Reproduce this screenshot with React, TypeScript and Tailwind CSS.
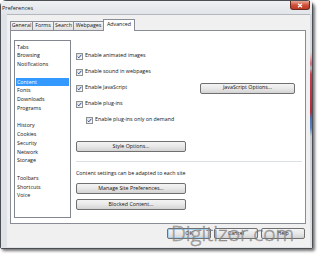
import React from "react";

const Check = () => (
  <span className="w-[7px] h-[7px] border border-[#8e8f8f] bg-linear-to-br from-[#d9dcdf] to-[#fbfbfb] flex items-center justify-center shrink-0">
    <svg viewBox="0 0 7 7" className="w-[5px] h-[5px]">
      <path d="M1 3.8 L2.6 5.4 L6 1.2" stroke="#21409a" strokeWidth="1.3" fill="none" />
    </svg>
  </span>
);

const Btn = ({ children, className = "" }: { children: React.ReactNode; className?: string }) => (
  <div
    className={
      "h-[11px] border border-[#707070] rounded-[2px] bg-linear-to-b from-[#f4f4f4] via-[#e8e8e8] to-[#d3d3d3] flex items-center justify-center text-[#111] shrink-0 " +
      className
    }
  >
    {children}
  </div>
);

const listItems: (string | null)[] = [
  "Tabs",
  "Browsing",
  "Notifications",
  null,
  "Content",
  "Fonts",
  "Downloads",
  "Programs",
  null,
  "History",
  "Cookies",
  "Security",
  "Network",
  "Storage",
  null,
  "Toolbars",
  "Shortcuts",
  "Voice",
];

export default function App() {
  return (
    <div className="w-[318px] h-[254px] bg-white relative overflow-hidden font-['Open_Sans','Noto_Sans',sans-serif] text-[5.3px] text-[#111]">
      <div className="w-[313px] h-[249px] flex flex-col border border-[#4b4f54] rounded-t-[6px] rounded-b-[2px] bg-[#dfe3e7] shadow-[2px_2px_3px_rgba(0,0,0,0.55)]">
        {/* Title bar */}
        <div className="h-[13px] flex items-start shrink-0 bg-linear-to-b from-[#eef0f2] to-[#e2e5e9]">
          <span className="pl-[1px] pt-[4px] text-[5.6px] leading-[7px] text-[#222]">Preferences</span>
          <div className="ml-auto mr-[2px] w-[20px] h-[9px] rounded-b-[3px] border border-t-0 border-[#6b2a20] bg-linear-to-b from-[#e8a898] via-[#d0503a] to-[#c03a26] flex items-center justify-center">
            <svg viewBox="0 0 6 5" className="w-[6px] h-[5px]">
              <path d="M1 0.8 L5 4.2 M5 0.8 L1 4.2" stroke="#fff" strokeWidth="1.2" />
            </svg>
          </div>
        </div>
        {/* Body */}
        <div className="flex-1 flex min-h-0">
          <div className="w-[6px] shrink-0 bg-[#dfe3e7]" />
          <div className="flex-1 flex flex-col bg-[#f0f0f0] border-t border-[#b4b8bc] pt-[4px] pl-[3px] pr-[4px] pb-[8px]">
            {/* Tabs */}
            <div className="h-[11px] flex items-end shrink-0">
              <div className="w-[23px] h-[9px] border border-b-0 border-[#898c95] bg-linear-to-b from-[#f5f5f5] to-[#e2e2e2] flex items-center justify-center">General</div>
              <div className="w-[22px] h-[9px] -ml-px border border-b-0 border-[#898c95] bg-linear-to-b from-[#f5f5f5] to-[#e2e2e2] flex items-center justify-center">Forms</div>
              <div className="w-[21px] h-[9px] -ml-px border border-b-0 border-[#898c95] bg-linear-to-b from-[#f5f5f5] to-[#e2e2e2] flex items-center justify-center">Search</div>
              <div className="w-[31px] h-[9px] -ml-px border border-b-0 border-[#898c95] bg-linear-to-b from-[#f5f5f5] to-[#e2e2e2] flex items-center justify-center">Webpages</div>
              <div className="w-[32px] h-[12px] -ml-px -mb-px relative z-10 border border-b-0 border-[#898c95] bg-white flex items-center justify-center pb-[1px]">Advanced</div>
            </div>
            {/* Panel */}
            <div className="flex-1 flex border border-[#898c95] bg-white pl-[3px] pt-[9px] pb-[5px] pr-[3px] min-h-0">
              <div className="w-[57px] shrink-0 border border-[#828790] bg-white pt-[1.5px]">
                {listItems.map((it, i) =>
                  it === "Content" ? (
                    <div key={i} className="h-[8.75px] leading-[8.75px] mx-[1px] px-[1px] bg-[#3399ff] text-white">
                      {it}
                    </div>
                  ) : (
                    <div key={i} className="h-[8.75px] leading-[8.75px] px-[2px]">
                      {it ?? ""}
                    </div>
                  )
                )}
              </div>
              <div className="flex-1 flex flex-col ml-[5px] pt-[8px]">
                <div className="h-[16px] flex items-center gap-[2px]">
                  <Check />
                  <span>Enable animated images</span>
                </div>
                <div className="h-[16px] flex items-center gap-[2px]">
                  <Check />
                  <span>Enable sound in webpages</span>
                </div>
                <div className="h-[16px] flex items-center gap-[2px]">
                  <Check />
                  <span>Enable JavaScript</span>
                  <Btn className="ml-auto mr-[7px] w-[95px]">JavaScript Options...</Btn>
                </div>
                <div className="h-[16px] flex items-center gap-[2px]">
                  <Check />
                  <span>Enable plug-ins</span>
                </div>
                <div className="h-[16px] flex items-center gap-[2px] pl-[10px]">
                  <Check />
                  <span>Enable plug-ins only on demand</span>
                </div>
                <Btn className="mt-[13px] w-[110px]">Style Options...</Btn>
                <div className="mt-[9px] h-px bg-[#dcdfe3] shrink-0" />
                <div className="mt-[7px] h-[8px] leading-[8px]">Content settings can be adapted to each site</div>
                <Btn className="mt-[6px] w-[110px]">Manage Site Preferences...</Btn>
                <Btn className="mt-[5px] w-[110px]">Blocked Content...</Btn>
              </div>
            </div>
            {/* Bottom buttons */}
            <div className="mt-[4px] h-[11px] flex justify-end gap-[3px] pr-[1px] shrink-0">
              <Btn className="w-[44px] border-[#3c7fb1] shadow-[inset_0_0_0_1px_#a6d3f2]">OK</Btn>
              <Btn className="w-[44px]">Cancel</Btn>
              <Btn className="w-[44px]">Help</Btn>
            </div>
          </div>
          <div className="w-[2px] shrink-0 bg-[linear-gradient(to_bottom,#d6dadf_0px,#d6dadf_38px,#e6a4ac_44px,#d06a78_50px,#b9bfc6_54px,#c8404f_60px,#b42a3a_98px,#4b70b0_104px,#5a82c2_114px,#c9cdd2_122px,#dfe2e5_100%)]" />
        </div>
        <div className="h-[1px] shrink-0 bg-[#dfe3e7]" />
      </div>
      <div className="absolute left-[171px] top-[223px] text-[21px] leading-none font-light text-[rgba(170,170,170,0.6)] [-webkit-text-stroke:0.5px_rgba(100,100,100,0.75)] pointer-events-none">
        Digitizor.com
      </div>
    </div>
  );
}
